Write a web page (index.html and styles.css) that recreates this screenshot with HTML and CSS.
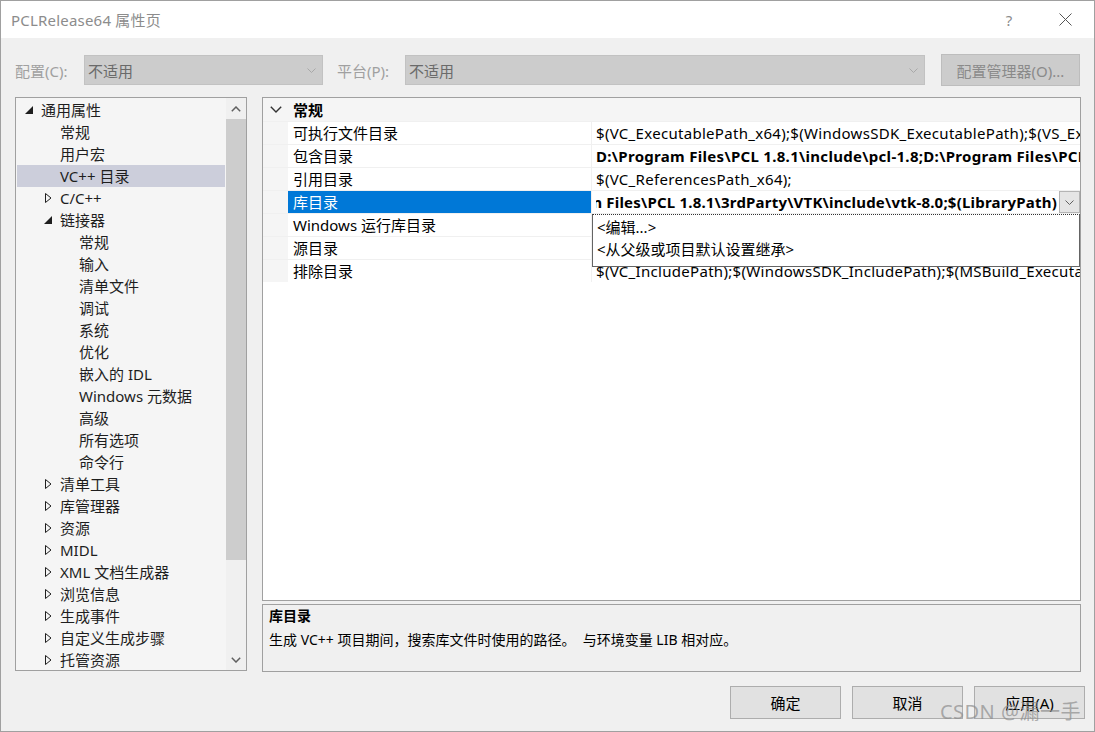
FILE: index.html
```html
<!DOCTYPE html>
<html lang="zh-CN">
<head>
    <meta charset="UTF-8">
    <title>PCLRelease64 属性页</title>
    <link rel="stylesheet" href="styles.css">
</head>
<body>
    <div class="window">
        <div class="titlebar">
            <span class="title">PCLRelease64 属性页</span>
            <span class="tb-btn help">?</span>
            <span class="tb-btn close">
                <svg width="13" height="13" viewBox="0 0 13 13"><path d="M0.5 0.5 L12.5 12.5 M12.5 0.5 L0.5 12.5" stroke="#555" stroke-width="1"/></svg>
            </span>
        </div>

        <div class="config-row">
            <span class="cfg-label">配置(C):</span>
            <div class="combo combo-config">
                <span>不适用</span>
                <svg class="combo-arrow" width="9" height="5" viewBox="0 0 9 5"><polyline points="0.5,0.5 4.5,4.5 8.5,0.5" fill="none" stroke="#a8a8a8"/></svg>
            </div>
            <span class="cfg-label second">平台(P):</span>
            <div class="combo combo-platform">
                <span>不适用</span>
                <svg class="combo-arrow" width="9" height="5" viewBox="0 0 9 5"><polyline points="0.5,0.5 4.5,4.5 8.5,0.5" fill="none" stroke="#a8a8a8"/></svg>
            </div>
            <div class="cfg-btn">配置管理器(O)...</div>
        </div>

        <div class="main">
            <div class="tree">
                <div class="tree-list">
                    <div class="node l0"><span class="exp"><svg width="8" height="8"><polygon points="8,0 8,8 0,8" fill="#1e1e1e"/></svg></span>通用属性</div>
                    <div class="node l1"><span class="exp"></span>常规</div>
                    <div class="node l1"><span class="exp"></span>用户宏</div>
                    <div class="node l1 selected"><span class="exp"></span>VC++ 目录</div>
                    <div class="node l1"><span class="exp"><svg width="8" height="10"><polygon points="1.5,0.5 7,5 1.5,9.5" fill="none" stroke="#1e1e1e"/></svg></span>C/C++</div>
                    <div class="node l1"><span class="exp"><svg width="8" height="8"><polygon points="8,0 8,8 0,8" fill="#1e1e1e"/></svg></span>链接器</div>
                    <div class="node l2"><span class="exp"></span>常规</div>
                    <div class="node l2"><span class="exp"></span>输入</div>
                    <div class="node l2"><span class="exp"></span>清单文件</div>
                    <div class="node l2"><span class="exp"></span>调试</div>
                    <div class="node l2"><span class="exp"></span>系统</div>
                    <div class="node l2"><span class="exp"></span>优化</div>
                    <div class="node l2"><span class="exp"></span>嵌入的 IDL</div>
                    <div class="node l2"><span class="exp"></span>Windows 元数据</div>
                    <div class="node l2"><span class="exp"></span>高级</div>
                    <div class="node l2"><span class="exp"></span>所有选项</div>
                    <div class="node l2"><span class="exp"></span>命令行</div>
                    <div class="node l1"><span class="exp"><svg width="8" height="10"><polygon points="1.5,0.5 7,5 1.5,9.5" fill="none" stroke="#1e1e1e"/></svg></span>清单工具</div>
                    <div class="node l1"><span class="exp"><svg width="8" height="10"><polygon points="1.5,0.5 7,5 1.5,9.5" fill="none" stroke="#1e1e1e"/></svg></span>库管理器</div>
                    <div class="node l1"><span class="exp"><svg width="8" height="10"><polygon points="1.5,0.5 7,5 1.5,9.5" fill="none" stroke="#1e1e1e"/></svg></span>资源</div>
                    <div class="node l1"><span class="exp"><svg width="8" height="10"><polygon points="1.5,0.5 7,5 1.5,9.5" fill="none" stroke="#1e1e1e"/></svg></span>MIDL</div>
                    <div class="node l1"><span class="exp"><svg width="8" height="10"><polygon points="1.5,0.5 7,5 1.5,9.5" fill="none" stroke="#1e1e1e"/></svg></span>XML 文档生成器</div>
                    <div class="node l1"><span class="exp"><svg width="8" height="10"><polygon points="1.5,0.5 7,5 1.5,9.5" fill="none" stroke="#1e1e1e"/></svg></span>浏览信息</div>
                    <div class="node l1"><span class="exp"><svg width="8" height="10"><polygon points="1.5,0.5 7,5 1.5,9.5" fill="none" stroke="#1e1e1e"/></svg></span>生成事件</div>
                    <div class="node l1"><span class="exp"><svg width="8" height="10"><polygon points="1.5,0.5 7,5 1.5,9.5" fill="none" stroke="#1e1e1e"/></svg></span>自定义生成步骤</div>
                    <div class="node l1"><span class="exp"><svg width="8" height="10"><polygon points="1.5,0.5 7,5 1.5,9.5" fill="none" stroke="#1e1e1e"/></svg></span>托管资源</div>
                </div>
                <div class="scrollbar">
                    <div class="sb-arrow"><svg width="10" height="6" viewBox="0 0 10 6"><polyline points="0.8,5.2 5,1 9.2,5.2" fill="none" stroke="#606060" stroke-width="1.5"/></svg></div>
                    <div class="sb-thumb"></div>
                    <div class="sb-track"></div>
                    <div class="sb-arrow"><svg width="10" height="6" viewBox="0 0 10 6"><polyline points="0.8,0.8 5,5 9.2,0.8" fill="none" stroke="#606060" stroke-width="1.5"/></svg></div>
                </div>
            </div>

            <div class="right">
                <div class="grid">
                    <div class="category">
                        <span class="cat-toggle"><svg width="12" height="7" viewBox="0 0 12 7"><polyline points="0.8,0.8 6,6 11.2,0.8" fill="none" stroke="#333" stroke-width="1.4"/></svg></span>
                        <span class="cat-name">常规</span>
                    </div>
                    <div class="prop">
                        <div class="margin"></div>
                        <div class="name">可执行文件目录</div>
                        <div class="value">$(VC_ExecutablePath_x64);$(WindowsSDK_ExecutablePath);$(VS_ExecutablePath);$(MSBuild_ExecutablePath);$(FxCopDir);$(PATH);</div>
                    </div>
                    <div class="prop">
                        <div class="margin"></div>
                        <div class="name">包含目录</div>
                        <div class="value bold">D:\Program Files\PCL 1.8.1\include\pcl-1.8;D:\Program Files\PCL 1.8.1\3rdParty\Boost\include\boost-1_64;$(IncludePath)</div>
                    </div>
                    <div class="prop">
                        <div class="margin"></div>
                        <div class="name">引用目录</div>
                        <div class="value">$(VC_ReferencesPath_x64);</div>
                    </div>
                    <div class="prop active">
                        <div class="margin"></div>
                        <div class="name">库目录</div>
                        <div class="value bold edit">
                            <div class="edit-text"><span>D:\Program Files\PCL 1.8.1\lib;D:\Program Files\PCL 1.8.1\3rdParty\VTK\include\vtk-8.0;$(LibraryPath)</span></div>
                            <div class="drop-btn"><svg width="9" height="5" viewBox="0 0 9 5"><polyline points="0.5,0.5 4.5,4.5 8.5,0.5" fill="none" stroke="#606060"/></svg></div>
                        </div>
                    </div>
                    <div class="prop">
                        <div class="margin"></div>
                        <div class="name">Windows 运行库目录</div>
                        <div class="value"></div>
                    </div>
                    <div class="prop">
                        <div class="margin"></div>
                        <div class="name">源目录</div>
                        <div class="value"></div>
                    </div>
                    <div class="prop">
                        <div class="margin"></div>
                        <div class="name">排除目录</div>
                        <div class="value">$(VC_IncludePath);$(WindowsSDK_IncludePath);$(MSBuild_ExecutablePath);$(VC_LibraryPath_x64);</div>
                    </div>

                    <div class="popup">
                        <div class="popup-item">&lt;编辑...&gt;</div>
                        <div class="popup-item">&lt;从父级或项目默认设置继承&gt;</div>
                    </div>
                </div>

                <div class="desc">
                    <div class="desc-title">库目录</div>
                    <div class="desc-text">生成 VC++ 项目期间，搜索库文件时使用的路径。&nbsp; 与环境变量 LIB 相对应。</div>
                </div>
            </div>
        </div>

        <div class="buttons">
            <div class="btn">确定</div>
            <div class="btn">取消</div>
            <div class="btn">应用(A)</div>
        </div>

        <div class="watermark">CSDN @漏一手</div>
    </div>
</body>
</html>
```

FILE: styles.css
```css
* {
    box-sizing: border-box;
}
body {
    margin: 0;
    background: #f0f0f0;
    font-family: "Noto Sans", "Noto Sans CJK SC", sans-serif;
    font-size: 15px;
    color: #000;
}
.window {
    position: relative;
    width: 1095px;
    height: 732px;
    border: 1px solid #a0a0a0;
    background: #f0f0f0;
    display: flex;
    flex-direction: column;
    overflow: hidden;
}

/* title bar */
.titlebar {
    height: 37px;
    flex: none;
    background: #fff;
    display: flex;
    align-items: center;
    padding-left: 10px;
}
.title {
    flex: 1;
    color: #8c8c8c;
    font-size: 15px;
    letter-spacing: 0.2px;
}
.tb-btn {
    width: 56px;
    height: 37px;
    display: flex;
    align-items: center;
    justify-content: center;
    color: #8c8c8c;
}
.close {
    margin-right: 1px;
}

/* configuration row */
.config-row {
    display: flex;
    align-items: center;
    height: 32px;
    margin-top: 16px;
    padding-left: 14px;
    flex: none;
}
.cfg-label {
    width: 69px;
    color: #a0a0a0;
}
.cfg-label.second {
    width: 68px;
    margin-left: 14px;
}
.combo {
    height: 30px;
    background: #cccccc;
    border: 1px solid #c2c2c2;
    display: flex;
    align-items: center;
    justify-content: space-between;
    padding: 0 6px 0 3px;
    color: #6a6a6a;
}
.combo-config {
    width: 239px;
}
.combo-platform {
    width: 520px;
}
.cfg-btn {
    width: 139px;
    height: 32px;
    margin-left: 16px;
    background: #cccccc;
    border: 1px solid #bdbdbd;
    color: #8a8a8a;
    display: flex;
    align-items: center;
    justify-content: center;
}

/* main area */
.main {
    display: flex;
    margin-top: 11px;
    padding-left: 14px;
    height: 575px;
    flex: none;
}
.tree {
    width: 232px;
    height: 574px;
    border: 1px solid #a0a0a0;
    background: #f5f5f5;
    display: flex;
    overflow: hidden;
}
.tree-list {
    flex: 1;
    padding: 1px 0 0 1px;
    overflow: hidden;
}
.node {
    height: 22px;
    line-height: 22px;
    display: flex;
    align-items: center;
    white-space: nowrap;
    color: #1e1e1e;
}
.node.l0 { padding-left: 8px; }
.node.l1 { padding-left: 27px; }
.node.l2 { padding-left: 46px; }
.node.selected {
    background: #cccedb;
    margin-right: 1px;
}
.exp {
    width: 16px;
    display: flex;
    align-items: center;
}
.scrollbar {
    width: 20px;
    background: #f0f0f0;
    display: flex;
    flex-direction: column;
}
.sb-arrow {
    height: 21px;
    display: flex;
    align-items: center;
    justify-content: center;
}
.sb-thumb {
    height: 441px;
    background: #cdcdcd;
}
.sb-track {
    flex: 1;
}

/* right column */
.right {
    margin-left: 15px;
    width: 819px;
    display: flex;
    flex-direction: column;
}
.grid {
    position: relative;
    height: 504px;
    border: 1px solid #a0a0a0;
    background: #fff;
}
.category {
    height: 23px;
    background: #f5f5f5;
    display: flex;
    align-items: center;
    font-weight: bold;
}
.cat-toggle {
    width: 25px;
    display: flex;
    justify-content: center;
    padding-left: 1px;
}
.cat-name {
    padding-left: 5px;
}
.prop {
    display: flex;
    height: 23px;
    line-height: 22px;
    border-top: 1px solid #f0f0f0;
    white-space: nowrap;
}
.prop .margin {
    width: 25px;
    background: #f5f5f5;
}
.prop .name {
    width: 304px;
    padding-left: 5px;
    border-right: 1px solid #f0f0f0;
    overflow: hidden;
}
.prop .value {
    flex: 1;
    padding-left: 4px;
    overflow: hidden;
    letter-spacing: 0.3px;
}
.bold {
    font-weight: bold;
}
.prop.active .name {
    background: #0078d7;
    color: #fff;
}
.value.edit {
    display: flex;
    padding-right: 0;
    letter-spacing: 0.2px;
}
.edit-text {
    flex: 1;
    display: flex;
    justify-content: flex-end;
    overflow: hidden;
    padding-right: 2px;
}
.drop-btn {
    width: 21px;
    height: 22px;
    background: #e5e5e5;
    border: 1px solid #b4b4b4;
    display: flex;
    align-items: center;
    justify-content: center;
}
.popup {
    position: absolute;
    left: 329px;
    top: 116px;
    width: 488px;
    height: 53px;
    background: #fff;
    border: 1px solid #646464;
    border-top: 1px dotted #333;
    padding-top: 1px;
}
.popup-item {
    height: 22px;
    line-height: 22px;
    padding-left: 4px;
}

/* description */
.desc {
    margin-top: 3px;
    height: 68px;
    border: 1px solid #a0a0a0;
    background: #f0f0f0;
    padding: 0 6px;
    font-size: 14px;
}
.desc-title {
    font-weight: bold;
    line-height: 22px;
}
.desc-text {
    line-height: 22px;
    margin-top: 2px;
}

/* bottom buttons */
.buttons {
    display: flex;
    justify-content: flex-end;
    gap: 11px;
    margin-top: 14px;
    padding-right: 9px;
}
.btn {
    width: 111px;
    height: 33px;
    background: #e1e1e1;
    border: 1px solid #adadad;
    display: flex;
    align-items: center;
    justify-content: center;
}

.watermark {
    position: absolute;
    right: 13px;
    bottom: 6px;
    font-size: 20px;
    color: rgba(140, 140, 140, 0.7);
    letter-spacing: 0.5px;
}
```
